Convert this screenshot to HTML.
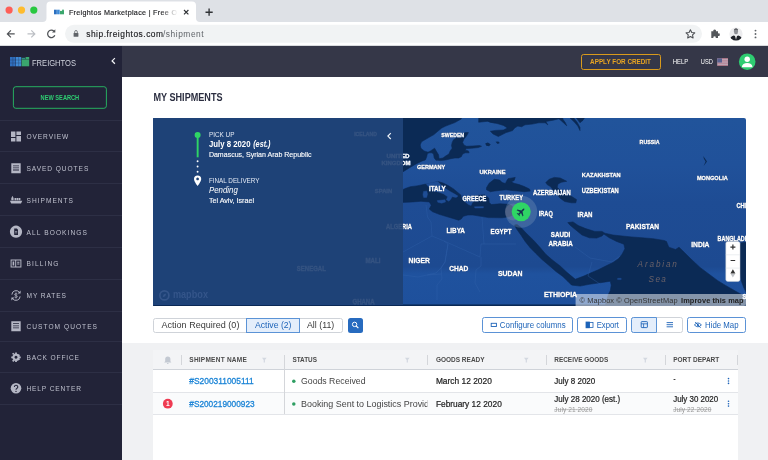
<!DOCTYPE html>
<html lang="en"><head><meta charset="utf-8"><title>Freightos Marketplace | Free Online Freight Quotes</title>
<style>
html,body{margin:0;padding:0;}
body{width:768px;height:460px;overflow:hidden;position:relative;background:#fff;font-family:"Liberation Sans",sans-serif;}
.a{position:absolute;box-sizing:border-box;}
.sep{position:absolute;left:0;width:122px;height:1px;background:#2d2f45;}
.btn{position:absolute;box-sizing:border-box;border:1.1px solid #5b92d6;border-radius:2.5px;background:#fff;}
.vsep{position:absolute;width:1px;background:#d4d6da;}
</style></head><body>

<!-- browser chrome -->
<div class="a" style="left:0;top:0;width:768px;height:22px;background:#dee1e6;"></div>
<div class="a" style="left:0;top:22px;width:768px;height:24px;background:#fff;border-bottom:1px solid #d9dbde;"></div>
<svg class="a" style="left:0;top:0;" width="768" height="46" viewBox="0 0 768 46">
  <circle cx="9.1" cy="10.1" r="3.6" fill="#fe5f57"/><circle cx="21.5" cy="10.1" r="3.6" fill="#febc2e"/><circle cx="33.8" cy="10.1" r="3.6" fill="#28c840"/>
  <path d="M42.5,22 Q46.5,22 46.5,18 V5.6 Q46.5,1.6 50.5,1.600 H192 Q196,1.600 196,5.600 V18 Q196,22 200,22 Z" fill="#fff"/>
  <!-- favicon -->
  <g><rect x="54" y="9.7" width="2.8" height="4.6" fill="#2a6fc0"/><rect x="57.1" y="9.7" width="2.6" height="4.6" fill="#3b8ad8"/><rect x="60" y="10.9" width="4" height="3.4" fill="#3aa76d"/><rect x="62" y="9.7" width="2" height="1.2" fill="#3aa76d"/></g>
  <!-- tab close -->
  <path d="M184,10 l4.400,4.400 M188.400,10 l-4.400,4.400" stroke="#303336" stroke-width="1.15" fill="none"/>
  <!-- new tab plus -->
  <path d="M205.500,12.200 h7.200 M209.100,8.600 v7.200" stroke="#303336" stroke-width="1.35" fill="none"/>
  <!-- nav arrows -->
  <path d="M14.7,33.9 h-7 M10.9,30.4 l-3.5,3.5 l3.5,3.5" stroke="#505357" stroke-width="1.25" fill="none"/>
  <path d="M27.5,33.9 h7 M31.3,30.4 l3.5,3.5 l-3.5,3.5" stroke="#bcbfc4" stroke-width="1.25" fill="none"/>
  <path d="M54,31.3 A3.7,3.7 0 1 0 54.8,35.2" stroke="#505357" stroke-width="1.25" fill="none"/><path d="M55.3,29.2 v3.3 h-3.3 z" fill="#505357"/>
  <!-- url pill -->
  <rect x="65" y="24.8" width="637" height="18" rx="9" fill="#f1f3f4"/>
  <!-- lock -->
  <rect x="73.6" y="33" width="4.8" height="3.8" rx="0.6" fill="#5f6368"/><path d="M74.7,33 v-1.2 a1.3,1.3 0 0 1 2.6,0 v1.2" stroke="#5f6368" stroke-width="0.8" fill="none"/>
  <!-- star -->
  <path d="M690.4,29.7 l1.35,2.75 3,.4 -2.2,2.1 .55,3 -2.7,-1.45 -2.7,1.45 .55,-3 -2.2,-2.1 3,-.4z" fill="none" stroke="#4b4e52" stroke-width="1.05" stroke-linejoin="round"/>
  <!-- puzzle -->
  <path d="M711.3,31.3 h2.1 a1.35,1.35 0 1 1 2.5,0 h2.1 v2.1 a1.35,1.35 0 1 1 0,2.5 v2.2 h-2.3 a1.25,1.25 0 1 0 -2.3,0 h-2.1 z" fill="#54575b"/>
  <!-- avatar -->
  <clipPath id="avc"><circle cx="736" cy="34" r="6.6"/></clipPath>
  <g clip-path="url(#avc)"><rect x="729" y="27" width="14" height="14" fill="#ececee"/>
  <ellipse cx="736" cy="31.6" rx="2.1" ry="2.7" fill="#8d8f94"/><path d="M733.8,30.8 q.2,-2.6 2.2,-2.6 q2,0 2.2,2.6 q-1,-1.3 -2.2,-1.3 q-1.200,0 -2.200,1.300z" fill="#3c3e43"/>
  <path d="M729.4,41 q.2,-4.600 4.400,-5.600 l2.200,1.200 2.200,-1.200 q4.200,1 4.400,5.600z" fill="#1f2228"/><path d="M735.100,36 l.9,3.800 .9,-3.800 -.9,-.5z" fill="#f4f4f4"/></g>
  <!-- kebab -->
  <circle cx="755.5" cy="30.6" r="0.95" fill="#5f6368"/><circle cx="755.5" cy="34" r="0.95" fill="#5f6368"/><circle cx="755.5" cy="37.4" r="0.95" fill="#5f6368"/>
</svg>

<!-- app header -->
<div class="a" style="left:122px;top:46px;width:646px;height:30.5px;background:#353748;"></div>
<div class="a" style="left:581px;top:54px;width:80px;height:15.5px;border:1px solid #d99a1c;border-radius:2.5px;"></div>
<svg class="a" style="left:716px;top:50px;" width="44" height="24" viewBox="716 50 44 24">
  <rect x="717.3" y="58.300" width="10.700" height="7.400" fill="#c4c4ce"/>
  <g fill="#b0657b"><rect x="717.3" y="58.300" width="10.700" height="1.060"/><rect x="717.3" y="60.420" width="10.700" height="1.060"/><rect x="717.3" y="62.540" width="10.700" height="1.060"/><rect x="717.3" y="64.660" width="10.700" height="1.040"/></g>
  <rect x="717.3" y="58.300" width="4.700" height="4.200" fill="#59618f"/>
  <circle cx="747.2" cy="61.7" r="8.3" fill="#2ecc71"/><circle cx="747.2" cy="59.2" r="2.7" fill="#fff"/><path d="M742,66.6 a5.2,3.6 0 0 1 10.4,0 v0.6 h-10.4z" fill="#fff"/>
</svg>

<!-- sidebar -->
<div class="a" style="left:0;top:46px;width:122px;height:414px;background:#222338;"></div>
<svg class="a" style="left:0;top:46px;" width="122" height="414" viewBox="0 46 122 414">
  <!-- logo -->
  <g>
    <rect x="10" y="57" width="5.6" height="9.3" fill="#2f6fbf"/><rect x="16" y="57" width="5.2" height="9.3" fill="#3f8ad6"/><rect x="21.6" y="59.4" width="7.6" height="6.9" fill="#3aa66e"/><rect x="25.6" y="57" width="3.6" height="2.2" fill="#3aa66e"/><rect x="21.6" y="57.8" width="3.6" height="1.4" fill="#2f8f86"/>
    <path d="M10,60 h11.2 M10,63 h11.2 M12.8,57 v9.3 M18.6,57 v9.3" stroke="#222338" stroke-width="0.5" opacity=".55"/>
  </g>
  <path d="M114.900,58.100 l-2.800,2.800 l2.800,2.800" stroke="#f2f3f6" stroke-width="1.25" fill="none"/>
  <rect x="13.4" y="86.7" width="93" height="21.6" rx="2.5" fill="none" stroke="#27ae60" stroke-width="1"/>
  <!-- icons -->
  <g fill="#b4b6c4">
    <!-- overview -->
    <path d="M11,131.5 h4.4 v5.6 h-4.4z M16.4,131.5 h4.6 v3.4 h-4.6z M11,138.1 h4.4 v3.4 h-4.4z M16.4,135.9 h4.6 v5.6 h-4.6z"/>
    <!-- saved quotes -->
    <path d="M11.3,163.3 h9.4 v10 h-9.4z M13,165.4 v.8 h6 v-.8z M13,167.5 v.8 h6 v-.8z M13,169.6 v.8 h6 v-.8z" fill-rule="evenodd"/>
    <!-- shipments -->
    <path d="M9.9,200.7 h12.4 l-1.3,2.7 h-9.8z M11.3,197.6 h2.3 v2.7 h-2.3z M12,196.3 h.9 v1.3 h-.9z M14.5,198 h1.7 v2.3 h-1.7z M16.6,198 h1.7 v2.3 h-1.7z M18.7,198 h1.7 v2.3 h-1.7z"/>
    <!-- all bookings -->
    <path d="M16,225.6 a6.1,6.1 0 1 0 0.01,0z M14.2,228.6 h2.6 l1.2,1.2 v5.2 h-3.8z" fill-rule="evenodd"/><path d="M15,231 h2.2 v.7 h-2.2z M15,232.6 h2.2 v.7 h-2.2z" opacity=".8"/>
    <!-- billing -->
    <path d="M10.6,259.4 h10.8 v8.2 h-10.8z M11.6,260.4 v6.2 h3.6 v-6.2z M16.2,260.4 v6.2 h4.2 v-6.2z M12.6,261.6 h1.6 v3.8 h-1.6z M17.2,261.8 h2.2 v.9 h-2.2z M17.2,263.6 h2.2 v.9 h-2.2z" fill-rule="evenodd"/>
    <!-- my rates -->
    <path d="M11.9,294.6 a4.1,4.1 0 0 1 7.4,-2.3 M20.1,296.4 a4.1,4.1 0 0 1 -7.4,2.3" fill="none" stroke="#b4b6c4" stroke-width="1"/><path d="M20.6,290.6 v3 h-3z M11.4,300.4 v-3 h3z M15.6,292.6 h.8 v5.8 h-.8z"/><path d="M17.4,294.2 q-1.4,-1 -2.6,-.2 q-.8,1 1.2,1.5 q2,.6 1.200,1.600 q-1.400,.8 -2.800,-.2" fill="none" stroke="#b4b6c4" stroke-width=".7"/>
    <!-- custom quotes -->
    <path d="M11.3,321.2 h9.4 v10 h-9.4z M13,323.3 v.8 h6 v-.8z M13,325.4 v.8 h6 v-.8z M13,327.5 v.8 h6 v-.8z" fill-rule="evenodd"/>
    <!-- back office gear -->
    <g transform="translate(16,357.3) scale(.88) translate(-16,-357)"><path d="M16,352.8 a4.2,4.2 0 1 0 0.01,0z M16,355.3 a1.7,1.7 0 1 1 -0.01,0z" fill-rule="evenodd"/>
    <path d="M15,351.6 h2 v2 h-2z M15,360.4 h2 v2 h-2z M10.6,356 h2 v2 h-2z M19.4,356 h2 v2 h-2z M11.5,353.1 l1.4,-1.4 1.4,1.4 -1.4,1.4z M17.7,359.3 l1.4,-1.4 1.4,1.4 -1.4,1.4z M11.5,360.9 l1.4,-1.4 1.4,1.4 -1.4,1.4z M17.7,354.7 l1.4,-1.4 1.4,1.4 -1.4,1.4z"/></g>
    <!-- help -->
    <circle cx="16" cy="388.3" r="5.3"/>
  </g>
  <path d="M14.4,387 a1.7,1.7 0 1 1 2.4,1.5 q-0.8,.4 -.8,1.3" stroke="#222338" stroke-width="1.1" fill="none"/><circle cx="16" cy="391.4" r=".7" fill="#222338"/>
</svg>
<div class="sep" style="top:119.7px"></div><div class="sep" style="top:151.3px"></div><div class="sep" style="top:182.9px"></div><div class="sep" style="top:214.7px"></div><div class="sep" style="top:246.8px"></div><div class="sep" style="top:278.8px"></div><div class="sep" style="top:310.9px"></div><div class="sep" style="top:340.7px"></div><div class="sep" style="top:372.1px"></div><div class="sep" style="top:403.7px"></div>

<!-- map -->
<svg class="a" style="left:153px;top:118px;border-radius:1px 2px 2px 1px;" width="593" height="188" viewBox="153 118 593 188">
  <defs><linearGradient id="lg" x1="0" y1="0" x2="0" y2="1"><stop offset="0" stop-color="#21549b"/><stop offset=".25" stop-color="#20519a"/><stop offset=".45" stop-color="#1e4c94"/><stop offset=".79" stop-color="#1d4a91"/><stop offset=".83" stop-color="#1f529e"/><stop offset="1" stop-color="#1e509c"/></linearGradient></defs>
  <rect x="153" y="118" width="593" height="188" fill="url(#lg)"/>
  <g fill="#0b2a55" stroke="#0b2a55" stroke-width="0.6" stroke-linejoin="round"><path d="M400.0,115.0 L461.3,118.1 L461.3,118.9 L454.8,122.6 L445.6,126.1 L441.7,128.0 L433.9,134.6 L426.1,139.1 L421.5,141.7 L420.2,145.0 L420.9,148.2 L424.1,150.9 L428.0,152.2 L430.6,150.9 L434.6,148.2 L436.5,151.5 L438.5,154.8 L439.1,158.7 L435.9,160.0 L434.2,158.0 L433.6,154.1 L431.9,152.8 L429.3,152.8 L427.4,153.5 L426.7,156.7 L425.4,160.0 L422.2,160.9 L415.6,164.2 L410.4,167.2 L405.2,170.4 L400.0,173.7Z"/><path d="M435.9,160.0 L439.1,158.7 L443.0,158.0 L445.6,156.1 L448.9,154.1 L450.2,150.9 L452.2,148.2 L451.5,145.6 L452.2,142.4 L453.5,139.8 L457.4,137.2 L461.3,135.2 L465.2,132.6 L468.4,132.6 L466.5,135.9 L463.9,139.1 L462.6,142.4 L463.9,145.0 L466.5,146.3 L473.0,146.0 L479.5,145.6 L481.5,146.3 L478.2,147.6 L471.7,148.2 L466.5,148.6 L465.2,150.2 L468.4,150.9 L469.1,152.8 L465.2,152.8 L462.6,154.1 L461.3,156.7 L458.7,158.0 L454.8,158.0 L450.8,158.7 L445.6,160.0 L440.4,160.6Z"/><path d="M483.4,115.0 L484.7,118.9 L490.0,122.2 L495.2,123.1 L500.0,122.2 L500.0,115.0Z"/><path d="M478.7,115.0 L478.7,122.2 L487.8,121.3 L495.6,123.1 L503.5,125.4 L507.4,128.0 L503.5,130.0 L495.6,130.4 L490.4,131.3 L493.0,133.9 L498.3,136.5 L502.2,134.6 L506.1,132.6 L512.6,130.6 L514.6,128.0 L517.8,126.1 L521.7,126.7 L525.0,124.8 L532.2,124.1 L538.7,122.8 L545.2,122.8 L547.8,124.8 L545.8,121.5 L553.0,120.2 L558.2,118.9 L563.4,118.1 L563.4,115.0Z"/><path d="M558.2,118.1 L562.1,121.5 L566.7,125.7 L565.4,122.8 L562.1,118.1Z"/><path d="M570.0,118.1 L573.9,121.5 L577.8,126.1 L580.0,130.6 L580.0,127.4 L577.1,122.2 L573.9,118.1Z"/><path d="M576.5,118.1 L580.0,122.8 L583.0,120.2 L584.3,118.1Z"/><path d="M400.0,190.9 L405.9,188.3 L410.4,186.7 L416.9,185.9 L424.8,184.3 L432.6,183.0 L437.8,181.5 L443.0,183.0 L448.2,185.6 L453.5,188.9 L457.4,192.2 L461.3,195.4 L465.2,196.7 L473.0,196.1 L476.9,195.4 L484.7,194.8 L488.7,198.0 L489.3,202.6 L491.3,204.6 L500,203.8 L508,204.2 L512,206 L514,210 L513,215 L509,216.8 L502,217.8 L491,217.6 L488.7,217.6 L480.8,216.3 L473.0,215.0 L467.8,215.0 L463.2,216.3 L461.3,218.9 L458.7,220.2 L452.2,218.2 L445.6,216.3 L439.1,214.3 L432.6,211.7 L429.3,209.1 L431.3,205.2 L429.3,201.9 L420.9,201.3 L413.0,201.9 L400.0,202.6Z"/><path d="M486.5,187.8 L489.1,183.3 L494.3,179.3 L499.6,180.0 L502.2,182.6 L505.4,183.5 L506.7,180.9 L508.0,178.7 L515.2,177.4 L514.2,180.4 L511.3,181.7 L513.9,183.3 L519.1,184.6 L524.3,186.5 L529.5,189.1 L530.2,191.1 L524.3,191.7 L517.8,191.1 L511.3,190.4 L506.1,189.8 L499.6,190.4 L494.3,191.1 L490.4,191.7 L486.5,189.8Z"/><path d="M545.8,182.6 L549.1,179.3 L554.3,177.4 L560.2,178.0 L566.7,181.3 L561.5,182.2 L558.0,183.9 L557.2,187.2 L560.2,190.4 L564.7,193.0 L571.3,196.3 L576.5,199.6 L575.8,202.8 L571.3,202.8 L564.7,201.5 L560.2,198.2 L556.9,194.3 L553.0,189.8 L550.4,186.5 L547.1,184.6Z"/><path d="M517,224.5 L521,227.5 L526,233 L533.5,240.2 L540,247.4 L546,254.5 L553,260.5 L560.2,266 L566,271.5 L572,276.6 L575.3,279.2 L576.5,278.8 L583.8,276.1 L591.1,272.8 L598.4,269.7 L605.7,266.1 L613,262.4 L618.5,258.8 L622.1,254.2 L624.9,248.7 L623.9,244.2 L616.6,241.4 L609.3,237.8 L603.9,234.1 L602,236 L596.6,238.1 L589.3,237.8 L582,235 L576.5,230.5 L570.1,225.2 L567.8,222.6 L573,221.9 L578.2,225.5 L585.6,228.6 L594.7,231.4 L602,231.4 L604.8,233.2 L613,235 L622.1,236 L631.2,236.9 L642.2,237.8 L653.1,238.7 L664.1,240.5 L666.5,241.5 L668.8,247.2 L675.6,249.5 L679,247.2 L682.5,250.6 L691,259 L700,267.4 L717.4,280.4 L726,285.7 L737,292 L746,297 L746,310 L604,310 L608.4,294.3 L610.3,290.7 L611.2,285.2 L610.3,281.2 L605.7,281.9 L598.4,283 L589.3,284.3 L580.1,286.1 L572.8,285.2 L571.5,285 L568,281.5 L562.8,276.5 L556,271.5 L549.7,266 L542,259.5 L535.4,253 L530,247.5 L525.2,241.5 L520.9,235 L516.3,228.5 L514.5,225Z"/><path d="M740.3,243 L747,242 L747,294 L743.5,287 L741,280 L739.5,270 L739,255Z"/><path d="M153,304.8 L746,304.8 L746,306 L153,306Z"/></g><g fill="#1e4d95" stroke="#1e4d95" stroke-width="0.4" stroke-linejoin="round"><path d="M426.1,183.7 L437.8,181.5 L440.4,184.3 L445.0,188.3 L450.2,191.5 L454.8,194.1 L458.0,196.1 L456.1,197.6 L452.2,196.7 L450.8,199.3 L448.9,201.3 L446.3,199.7 L447.6,196.7 L443.7,194.1 L439.1,192.2 L433.9,190.9 L430.0,188.3 L427.4,185.6Z"/><path d="M437.2,200.6 L445.0,199.7 L445.6,201.9 L441.7,203.2 L437.8,202.3Z"/><path d="M423.5,191.5 L426.7,190.9 L427.6,194.1 L426.7,197.4 L423.7,197.6 L422.9,194.8Z"/><path d="M461.3,195.4 L473.0,196.1 L476.3,198.0 L474.3,201.3 L472.4,202.6 L471.1,205.5 L468.4,204.6 L465.2,201.9 L462.6,199.3Z"/><path d="M474.3,206.8 L483.4,206.5 L483.4,207.9 L475.0,208.1Z"/><path d="M617.6,278.3 L621.2,278.3 L621.2,279.6 L617.6,279.6Z"/></g><g fill="#0b2a55"><path d="M485.2,143.4 L487.8,142.6 L490.7,144.3 L489.1,146.3 L486.3,145.8Z"/><path d="M495.6,141.7 L498.3,141.5 L499.8,143.0 L497.6,143.9Z"/><path d="M703.2,156 L705,158.6 L707,161.5 L705.2,164 L703.6,166 L704.6,163.8 L705.6,161.6 L704,159Z"/></g>
  <!-- borders -->
  <g stroke="#3565ad" stroke-width="0.5" fill="none" opacity=".7">
    <path d="M426,205 L427.5,217 L431,222 L432,236 L444,241 L448,244 L445,262 L441,268 L436,273 L427,275"/>
    <path d="M444,241 L480,257 L481,244 L484,244 L482,217"/>
    <path d="M484,244 L516,244 M481,257 L481,266 L476,270 L475,283 L480,292"/>
    <path d="M403,252 L432,236 M448,244 L445,262 L441,268 L442,279 L437,285 L437,300"/>
    <path d="M403,275 L418,277 L427,275 L441,274"/>
    <path d="M575,247 L590,258 L612,262 L620,256 M592,262 L588,276 L600,284"/>
  </g>
  <!-- marker -->
  <circle cx="513.5" cy="212" r="8.5" fill="#8a7f9c" opacity=".35"/>
  <circle cx="521.2" cy="211.8" r="16" fill="#7f9bbd" opacity=".33"/>
  <circle cx="521.2" cy="211.8" r="9.5" fill="#2fd565"/>
  <g transform="translate(521.2,211.8) rotate(45) scale(.54)" fill="#17304f"><path d="M0,-8 C1,-8 1.4,-6.5 1.4,-5 L1.4,-2 L8,2.2 L8,4 L1.4,1.8 L1.2,5.6 L3.4,7.2 L3.4,8.4 L0,7.4 L-3.4,8.4 L-3.4,7.2 L-1.2,5.6 L-1.4,1.8 L-8,4 L-8,2.2 L-1.4,-2 L-1.4,-5 C-1.4,-6.5 -1,-8 0,-8Z"/></g>
  <rect x="153" y="118" width="250" height="186.8" fill="#1e4c94"/>
  <g font-family="Liberation Sans, sans-serif" font-weight="bold" font-size="6.3" fill="#fff" stroke="#fff" stroke-width=".3" style="filter:drop-shadow(0 0 .7px #153a75) drop-shadow(0 0 .7px #153a75)"><text x="441.3" y="136.7" font-size="5.9" textLength="22.8" lengthAdjust="spacingAndGlyphs">SWEDEN</text><text x="639.6" y="143.9" font-size="5.9" textLength="20" lengthAdjust="spacingAndGlyphs">RUSSIA</text><text x="417.0" y="169.3" font-size="5.9" textLength="28.3" lengthAdjust="spacingAndGlyphs">GERMANY</text><text x="479.5" y="173.6" font-size="5.9" textLength="26" lengthAdjust="spacingAndGlyphs">UKRAINE</text><text x="581.8" y="177.0" font-size="5.9" textLength="38.9" lengthAdjust="spacingAndGlyphs">KAZAKHSTAN</text><text x="696.9" y="179.9" font-size="5.9" textLength="30.9" lengthAdjust="spacingAndGlyphs">MONGOLIA</text><text x="429.0" y="190.6" font-size="6.3" textLength="16.7" lengthAdjust="spacingAndGlyphs">ITALY</text><text x="462.4" y="200.7" font-size="6.3" textLength="23.9" lengthAdjust="spacingAndGlyphs">GREECE</text><text x="499.4" y="199.7" font-size="6.3" textLength="23.6" lengthAdjust="spacingAndGlyphs">TURKEY</text><text x="533.1" y="195.4" font-size="6.3" textLength="37.6" lengthAdjust="spacingAndGlyphs">AZERBAIJAN</text><text x="581.8" y="192.5" font-size="6.3" textLength="37" lengthAdjust="spacingAndGlyphs">UZBEKISTAN</text><text x="538.7" y="215.6" font-size="6.7" textLength="14.1" lengthAdjust="spacingAndGlyphs">IRAQ</text><text x="577.5" y="217.1" font-size="6.7" textLength="15" lengthAdjust="spacingAndGlyphs">IRAN</text><text x="626.0" y="229.0" font-size="6.7" textLength="33" lengthAdjust="spacingAndGlyphs">PAKISTAN</text><text x="446.4" y="232.9" font-size="6.7" textLength="18.5" lengthAdjust="spacingAndGlyphs">LIBYA</text><text x="490.6" y="234.3" font-size="6.7" textLength="21" lengthAdjust="spacingAndGlyphs">EGYPT</text><text x="550.7" y="237.2" font-size="6.7" textLength="19.6" lengthAdjust="spacingAndGlyphs">SAUDI</text><text x="548.4" y="245.8" font-size="6.7" textLength="24.3" lengthAdjust="spacingAndGlyphs">ARABIA</text><text x="691.2" y="247.3" font-size="6.7" textLength="18.3" lengthAdjust="spacingAndGlyphs">INDIA</text><text x="408.6" y="263.1" font-size="6.7" textLength="21.3" lengthAdjust="spacingAndGlyphs">NIGER</text><text x="449.3" y="270.7" font-size="6.7" textLength="19.1" lengthAdjust="spacingAndGlyphs">CHAD</text><text x="497.9" y="276.0" font-size="6.7" textLength="24.5" lengthAdjust="spacingAndGlyphs">SUDAN</text><text x="543.9" y="297.1" font-size="6.7" textLength="33.3" lengthAdjust="spacingAndGlyphs">ETHIOPIA</text><text x="717.6" y="240.5" font-size="6.7" textLength="38.3" lengthAdjust="spacingAndGlyphs">BANGLADESH</text><text x="736.4" y="208.4" font-size="6.7" textLength="18" lengthAdjust="spacingAndGlyphs">CHINA</text><text x="386.5" y="157.8" font-size="5.9" textLength="23" lengthAdjust="spacingAndGlyphs">UNITED</text><text x="381.5" y="165.1" font-size="5.9" textLength="29" lengthAdjust="spacingAndGlyphs">KINGDOM</text><text x="386.0" y="229.0" font-size="6.7" textLength="26" lengthAdjust="spacingAndGlyphs">ALGERIA</text><text x="354.2" y="136.4" font-size="5.9" textLength="22.7" lengthAdjust="spacingAndGlyphs">ICELAND</text><text x="374.8" y="193.4" font-size="5.9" textLength="17.4" lengthAdjust="spacingAndGlyphs">SPAIN</text><text x="365.5" y="263.3" font-size="6.7" textLength="15" lengthAdjust="spacingAndGlyphs">MALI</text><text x="296.8" y="271.1" font-size="6.7" textLength="29" lengthAdjust="spacingAndGlyphs">SENEGAL</text><text x="352.5" y="303.7" font-size="6.7" textLength="22" lengthAdjust="spacingAndGlyphs">GHANA</text><text x="742.5" y="299.4" font-size="6.7" textLength="32" lengthAdjust="spacingAndGlyphs">SRI LANKA</text></g>
  <!-- panel -->
  <rect x="153" y="118" width="250" height="186.8" fill="#1f4174" opacity=".91"/>
  <!-- mapbox logo -->
  <circle cx="164.4" cy="295.4" r="4.5" fill="none" stroke="#34558a" stroke-width="1.7"/><path d="M162.6,297.2 l1,-2.6 2.6,-1 -1,2.6z" fill="#34558a"/>
  <!-- timeline -->
  <rect x="196.7" y="135" width="1.9" height="22.3" fill="#2fd565"/>
  <circle cx="197.6" cy="134.9" r="3" fill="#2fd565"/>
  <circle cx="197.6" cy="161.3" r=".95" fill="#fff"/><circle cx="197.6" cy="166.5" r=".95" fill="#fff"/><circle cx="197.6" cy="171.7" r=".95" fill="#fff"/>
  <path d="M197.6,175.4 a3.6,3.6 0 0 1 3.6,3.6 c0,2.6 -3.6,7 -3.6,7 c0,0 -3.6,-4.4 -3.6,-7 a3.6,3.6 0 0 1 3.6,-3.6z M197.6,177.6 a1.35,1.35 0 1 0 0.01,0z" fill="#fff" fill-rule="evenodd"/>
  <path d="M390.800,133.100 l-2.900,2.950 l2.900,2.950" stroke="#eef2f8" stroke-width="1.2" fill="none"/>
  <!-- attribution -->
  <rect x="575.6" y="294" width="171" height="12" fill="#fff" opacity=".5"/>
  <!-- zoom ctrl -->
  <rect x="725.8" y="241.5" width="14.2" height="39.9" rx="2" fill="#fff" stroke="#c5cad3" stroke-width=".5"/>
  <path d="M725.8,254.8 h14.2 M725.8,268.1 h14.2" stroke="#dde0e6" stroke-width=".6"/>
  <path d="M730.4,247.1 h5 M732.9,244.6 v5 M730.6,260.5 h4.6" stroke="#333" stroke-width="1.2"/>
  <path d="M732.9,269.2 l2.5,4.3 h-5z" fill="#333"/><path d="M732.9,277.6 l2.2,-3.6 h-4.4z" fill="#c0c3c8"/>
</svg>

<!-- toolbar -->
<div class="a" style="left:153.4px;top:317.5px;width:189.2px;height:15px;border:1px solid #cfd3d9;border-radius:2.5px;background:#fff;"></div>
<div class="a" style="left:246.3px;top:317.5px;width:53.3px;height:15px;border:1px solid #5b93d6;background:#e4eefb;"></div>
<div class="a" style="left:347.7px;top:317.5px;width:15px;height:15px;border-radius:2.5px;background:#276bbf;"></div>
<div class="btn" style="left:482.3px;top:317.3px;width:90.6px;height:15.3px;"></div>
<div class="btn" style="left:577.2px;top:317.3px;width:49.6px;height:15.3px;"></div>
<div class="btn" style="left:631px;top:317.3px;width:51.7px;height:15.3px;border-color:#cfd3d9;"></div>
<div class="btn" style="left:631px;top:317.3px;width:26px;height:15.3px;background:#e4eefb;border-color:#5b93d6;border-radius:2.5px 0 0 2.5px;"></div>
<div class="btn" style="left:687.3px;top:317.3px;width:59px;height:15.3px;"></div>
<svg class="a" style="left:340px;top:315px;" width="410" height="20" viewBox="340 315 410 20">
  <circle cx="354.6" cy="324.4" r="2.2" fill="none" stroke="#fff" stroke-width="1"/><path d="M356.2,326 l2.2,2.2" stroke="#fff" stroke-width="1.1"/>
  <rect x="491.2" y="323.3" width="5.2" height="3.2" fill="none" stroke="#1d63b8" stroke-width=".9"/>
  <rect x="585.6" y="321.6" width="4.2" height="6.6" fill="#1d63b8"/><rect x="589.4" y="322.4" width="3.6" height="5" fill="none" stroke="#1d63b8" stroke-width=".8"/>
  <rect x="641.2" y="321.6" width="6.2" height="6" rx=".6" fill="none" stroke="#1d63b8" stroke-width=".9"/><path d="M641.2,323.8 h6.2 M643.6,323.8 v3.8" stroke="#1d63b8" stroke-width=".8"/>
  <path d="M666.6,322.6 h6.4 M666.6,324.7 h6.4 M666.6,326.8 h6.4" stroke="#1d63b8" stroke-width=".9"/>
  <path d="M694.4,324.9 q3.5,-3.8 7,0 q-3.5,3.8 -7,0z" fill="none" stroke="#1d63b8" stroke-width=".9"/><circle cx="697.9" cy="324.9" r="1" fill="#1d63b8"/><path d="M695.2,322 l5.4,5.8" stroke="#1d63b8" stroke-width=".9"/>
</svg>

<!-- table -->
<div class="a" style="left:122px;top:343px;width:646px;height:117px;background:#f0f1f3;"></div>
<div class="a" style="left:153.4px;top:350px;width:584.3px;height:110px;background:#fff;"></div>
<div class="a" style="left:153.4px;top:350px;width:584.3px;height:20.2px;background:#f3f4f6;border-bottom:1.6px solid #cfd3d9;"></div>
<div class="a" style="left:153.4px;top:391.6px;width:584.3px;height:1px;background:#e3e5e9;"></div>
<div class="a" style="left:153.4px;top:392.6px;width:584.3px;height:21.6px;background:#fafbfc;"></div>
<div class="a" style="left:153.4px;top:414.2px;width:584.3px;height:1px;background:#e3e5e9;"></div>
<div class="vsep" style="left:181px;top:355px;height:10px;"></div>
<div class="vsep" style="left:284px;top:355px;height:59px;"></div>
<div class="vsep" style="left:427.3px;top:355px;height:10px;"></div>
<div class="vsep" style="left:546px;top:355px;height:10px;"></div>
<div class="vsep" style="left:665px;top:355px;height:10px;"></div>
<div class="vsep" style="left:736.6px;top:355px;height:10px;"></div>
<svg class="a" style="left:153px;top:350px;" width="590" height="70" viewBox="153 350 590 70">
  <path d="M167.8,356.4 a2.6,2.6 0 0 1 2.6,2.6 v2.2 l1,1.2 h-7.2 l1,-1.2 v-2.2 a2.6,2.6 0 0 1 2.6,-2.6z M166.9,363 h1.8 a.9,.9 0 0 1 -1.8,0z" fill="#c3c9d2"/>
  <g fill="#d3d8e0"><path d="M262,357.8 h4.6 l-1.7,2.2 v2.6 h-1.2 v-2.6z"/><path d="M405,357.8 h4.6 l-1.7,2.2 v2.6 h-1.2 v-2.6z"/><path d="M524,357.8 h4.6 l-1.7,2.2 v2.6 h-1.2 v-2.6z"/><path d="M643,357.8 h4.6 l-1.7,2.2 v2.6 h-1.2 v-2.6z"/></g>
  <circle cx="293.8" cy="381.2" r="1.75" fill="#2e9e62"/><circle cx="293.8" cy="403.9" r="1.75" fill="#2e9e62"/>
  <circle cx="167.8" cy="403.7" r="4.9" fill="#ef3b52"/>
  <g fill="#1d63b8"><circle cx="728.5" cy="378.6" r=".8"/><circle cx="728.5" cy="381" r=".8"/><circle cx="728.5" cy="383.4" r=".8"/><circle cx="728.5" cy="401.3" r=".8"/><circle cx="728.5" cy="403.7" r=".8"/><circle cx="728.5" cy="406.1" r=".8"/></g>
</svg>

<svg class="a" style="left:0;top:0;will-change:transform;" width="768" height="460" viewBox="0 0 768 460" font-family="Liberation Sans, sans-serif"><defs><linearGradient id="fg" x1="0" y1="0" x2="1" y2="0"><stop offset="0" stop-color="#fff"/><stop offset=".86" stop-color="#fff"/><stop offset="1" stop-color="#000"/></linearGradient><mask id="fadem" maskUnits="userSpaceOnUse" x="60" y="0" width="120" height="22"><rect x="60" y="0" width="117.5" height="22" fill="url(#fg)"/></mask><clipPath id="clipc"><rect x="290" y="393" width="137.4" height="21"/></clipPath></defs>
<text x="68.9" y="14.88" font-size="7.2" fill="#202124" stroke="#202124" stroke-width=".15" textLength="108.1" mask="url(#fadem)">Freightos Marketplace | Free O</text>
<text x="86.2" y="36.81" font-size="8.4" fill="#202124" stroke="#202124" stroke-width=".15" textLength="76.8">ship.freightos.com</text>
<text x="163" y="36.81" font-size="8.4" fill="#5f6368" textLength="40.6">/shipment</text>
<text x="32" y="66.41" font-size="9.8" fill="#cfd2dc" textLength="44" lengthAdjust="spacingAndGlyphs">FREIGHTOS</text>
<text x="40.6" y="99.99" font-size="6.4" font-weight="bold" fill="#2ecc71" textLength="38.6" lengthAdjust="spacingAndGlyphs">NEW SEARCH</text>
<text x="26.5" y="139.06" font-size="6.6" fill="#bfc1ce" textLength="41.7">OVERVIEW</text>
<text x="26.5" y="170.66" font-size="6.6" fill="#bfc1ce" textLength="61.8">SAVED QUOTES</text>
<text x="26.5" y="202.66" font-size="6.6" fill="#bfc1ce" textLength="46.5">SHIPMENTS</text>
<text x="26.5" y="234.66" font-size="6.6" fill="#bfc1ce" textLength="60.5">ALL BOOKINGS</text>
<text x="26.5" y="266.16" font-size="6.6" fill="#bfc1ce" textLength="31.9">BILLING</text>
<text x="26.5" y="297.86" font-size="6.6" fill="#bfc1ce" textLength="39.5">MY RATES</text>
<text x="26.5" y="328.66" font-size="6.6" fill="#bfc1ce" textLength="70.5">CUSTOM QUOTES</text>
<text x="26.5" y="359.56" font-size="6.6" fill="#bfc1ce" textLength="52.5">BACK OFFICE</text>
<text x="26.5" y="390.56" font-size="6.6" fill="#bfc1ce" textLength="54.5">HELP CENTER</text>
<text x="590.1" y="63.89" font-size="6.4" font-weight="bold" fill="#e9a521" textLength="60.9" lengthAdjust="spacingAndGlyphs">APPLY FOR CREDIT</text>
<text x="672.7" y="63.79" font-size="6.4" fill="#fff" textLength="15.6" lengthAdjust="spacingAndGlyphs">HELP</text>
<text x="700.8" y="63.79" font-size="6.4" fill="#fff" textLength="12.0" lengthAdjust="spacingAndGlyphs">USD</text>
<text x="153.5" y="101.29" font-size="10.3" font-weight="bold" fill="#2b2e40" textLength="69.0" lengthAdjust="spacingAndGlyphs">MY SHIPMENTS</text>
<text x="208.9" y="137.01" font-size="7" fill="#e3e9f4" textLength="25.6" lengthAdjust="spacingAndGlyphs">PICK UP</text>
<text x="208.9" y="147.48" font-size="8.6" font-weight="bold" fill="#fff" textLength="41.6" lengthAdjust="spacingAndGlyphs">July 8 2020</text>
<text x="253.2" y="147.34" font-size="8.2" font-weight="bold" font-style="italic" fill="#fff" textLength="17.3" lengthAdjust="spacingAndGlyphs">(est.)</text>
<text x="208.9" y="156.75" font-size="7.4" fill="#fff" stroke="#fff" stroke-width=".12" textLength="102.7" lengthAdjust="spacingAndGlyphs">Damascus, Syrian Arab Republic</text>
<text x="208.9" y="183.01" font-size="7" fill="#e3e9f4" textLength="50.6" lengthAdjust="spacingAndGlyphs">FINAL DELIVERY</text>
<text x="208.9" y="193.28" font-size="8.6" font-style="italic" fill="#fff" textLength="28.9" lengthAdjust="spacingAndGlyphs">Pending</text>
<text x="208.9" y="202.85" font-size="7.4" fill="#fff" stroke="#fff" stroke-width=".12" textLength="45.1" lengthAdjust="spacingAndGlyphs">Tel Aviv, Israel</text>
<text x="172.9" y="298.34" font-size="11" font-weight="bold" fill="#34558a" textLength="35.1" lengthAdjust="spacingAndGlyphs">mapbox</text>
<text x="637.6" y="267.14" font-size="8.2" font-style="italic" fill="#6a6168" textLength="39.3">Arabian</text>
<text x="648.6" y="281.74" font-size="8.2" font-style="italic" fill="#6a6168" textLength="17.3">Sea</text>
<text x="579.5" y="302.95" font-size="7.4" fill="#333" textLength="98.0">© Mapbox © OpenStreetMap</text>
<text x="681" y="302.95" font-size="7.4" font-weight="bold" fill="#222" textLength="62.5">Improve this map</text>
<text x="161.5" y="328.12" font-size="9" fill="#3a3a3a" textLength="77.9">Action Required (0)</text>
<text x="254.9" y="328.12" font-size="9" fill="#1d63b8" textLength="36.6" lengthAdjust="spacingAndGlyphs">Active (2)</text>
<text x="307" y="328.12" font-size="9" fill="#3a3a3a" textLength="27.2" lengthAdjust="spacingAndGlyphs">All (11)</text>
<text x="499.8" y="327.91" font-size="8.4" fill="#1d63b8" textLength="65.9" lengthAdjust="spacingAndGlyphs">Configure columns</text>
<text x="596.7" y="327.91" font-size="8.4" fill="#1d63b8" textLength="22.3" lengthAdjust="spacingAndGlyphs">Export</text>
<text x="705" y="327.91" font-size="8.4" fill="#1d63b8" textLength="33.5" lengthAdjust="spacingAndGlyphs">Hide Map</text>
<text x="189.3" y="362.33" font-size="6.5" font-weight="bold" fill="#4a4a4a" textLength="57.5">SHIPMENT NAME</text>
<text x="292.4" y="362.33" font-size="6.5" font-weight="bold" fill="#4a4a4a" textLength="24.6" lengthAdjust="spacingAndGlyphs">STATUS</text>
<text x="435.9" y="362.33" font-size="6.5" font-weight="bold" fill="#4a4a4a" textLength="48.7" lengthAdjust="spacingAndGlyphs">GOODS READY</text>
<text x="554.3" y="362.33" font-size="6.5" font-weight="bold" fill="#4a4a4a" textLength="53.9" lengthAdjust="spacingAndGlyphs">RECEIVE GOODS</text>
<text x="673.2" y="362.33" font-size="6.5" font-weight="bold" fill="#4a4a4a" textLength="46.1" lengthAdjust="spacingAndGlyphs">PORT DEPART</text>
<text x="189.3" y="384.15" font-size="8.8" fill="#1b84d6" stroke="#1b84d6" stroke-width=".3" textLength="64.4" lengthAdjust="spacingAndGlyphs">#S200311005111</text>
<text x="301" y="384.22" font-size="9" fill="#444" textLength="64.5" lengthAdjust="spacingAndGlyphs">Goods Received</text>
<text x="435.9" y="384.08" font-size="8.6" fill="#1e1e1e" stroke="#1e1e1e" stroke-width=".22" textLength="55.9" lengthAdjust="spacingAndGlyphs">March 12 2020</text>
<text x="554.3" y="384.08" font-size="8.6" fill="#1e1e1e" stroke="#1e1e1e" stroke-width=".22" textLength="41.0" lengthAdjust="spacingAndGlyphs">July 8 2020</text>
<text x="673.6" y="381.68" font-size="8.6" fill="#1e1e1e" stroke="#1e1e1e" stroke-width=".22" textLength="2.0" lengthAdjust="spacingAndGlyphs">-</text>
<text x="189.3" y="406.85" font-size="8.8" fill="#1b84d6" stroke="#1b84d6" stroke-width=".3" textLength="65.3" lengthAdjust="spacingAndGlyphs">#S200219000923</text>
<text x="301" y="406.92" font-size="9" fill="#444" textLength="136" lengthAdjust="spacingAndGlyphs" clip-path="url(#clipc)">Booking Sent to Logistics Provider</text>
<text x="435.9" y="406.78" font-size="8.6" fill="#1e1e1e" stroke="#1e1e1e" stroke-width=".22" textLength="65.9" lengthAdjust="spacingAndGlyphs">February 12 2020</text>
<text x="554.3" y="402.48" font-size="8.6" fill="#1e1e1e" stroke="#1e1e1e" stroke-width=".22" textLength="65.9" lengthAdjust="spacingAndGlyphs">July 28 2020 (est.)</text>
<text x="554.3" y="411.76" font-size="6.6" fill="#9a9a9a" text-decoration="line-through" textLength="38.1">July 21 2020</text>
<text x="673.2" y="402.48" font-size="8.6" fill="#1e1e1e" stroke="#1e1e1e" stroke-width=".22" textLength="45.0" lengthAdjust="spacingAndGlyphs">July 30 2020</text>
<text x="673.2" y="411.76" font-size="6.6" fill="#9a9a9a" text-decoration="line-through" textLength="38.1">July 22 2020</text>
<text x="166" y="406.16" font-size="6.6" font-weight="bold" fill="#fff">1</text>
</svg>
</body></html>
